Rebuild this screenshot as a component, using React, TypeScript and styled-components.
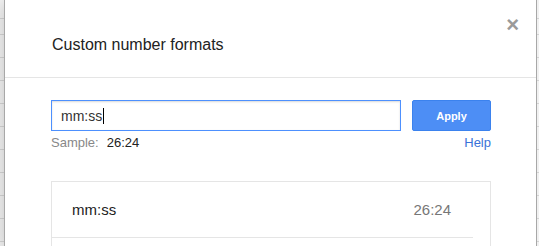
import styled, { createGlobalStyle } from 'styled-components'

const GlobalStyle = createGlobalStyle`
  html, body {
    margin: 0;
    padding: 0;
    background: #ffffff;
    font-family: "Liberation Sans", Arial, sans-serif;
  }
  body {
    width: 539px;
    height: 246px;
    overflow: hidden;
  }
`

const Page = styled.div`
  display: flex;
  width: 539px;
  height: 246px;
  overflow: hidden;
`
const Gutter = styled.div<{ $width: number }>`
  width: ${(p) => p.$width}px;
  flex-shrink: 0;
  background-color: #f1f1f1;
  background-image: repeating-linear-gradient(
    to bottom,
    transparent 0,
    transparent 10px,
    #d4d4d4 10px,
    #d4d4d4 11px,
    transparent 11px,
    transparent 23px
  );
  background-position: 0 24px;
`
const Dialog = styled.div`
  flex: 1;
  display: flex;
  flex-direction: column;
  background: #ffffff;
  border-left: 1px solid #a8a8a8;
  border-right: 1px solid #a8a8a8;
  box-shadow: 0 4px 16px rgba(0, 0, 0, 0.2);
  overflow: hidden;
`
const Header = styled.div`
  position: relative;
  flex-shrink: 0;
  height: 78px;
  box-sizing: border-box;
  padding: 35px 0 0 47px;
  border-bottom: 1px solid #e5e5e5;
`
const Title = styled.div`
  font-size: 16px;
  line-height: 19px;
  color: #222222;
`
const CloseButton = styled.div`
  position: absolute;
  top: 14px;
  right: 17px;
  font-size: 22px;
  line-height: 22px;
  font-weight: bold;
  color: #9a9a9a;
  cursor: pointer;
`
const Body = styled.div`
  flex-shrink: 0;
  display: flex;
  flex-direction: column;
  padding: 22px 45px 0 46px;
`
const InputRow = styled.div`
  display: flex;
  gap: 11px;
`
const FormatInput = styled.div`
  width: 350px;
  height: 31px;
  box-sizing: border-box;
  border: 1px solid #4d90fe;
  box-shadow: inset 0 1px 2px rgba(0, 0, 0, 0.15);
  padding: 0 9px;
  display: flex;
  align-items: center;
  font-size: 14px;
  color: #333333;
`
const Caret = styled.span`
  display: inline-block;
  width: 1px;
  height: 16px;
  margin-left: 1px;
  background: #000000;
  vertical-align: middle;
`
const ApplyButton = styled.div`
  width: 79px;
  height: 31px;
  box-sizing: border-box;
  border: 1px solid #3b82ee;
  border-radius: 2px;
  background: #4d8ef5;
  color: #ffffff;
  font-size: 11px;
  font-weight: bold;
  display: flex;
  align-items: center;
  justify-content: center;
`
const SampleRow = styled.div`
  display: flex;
  justify-content: space-between;
  margin-top: 4px;
  font-size: 13px;
  line-height: 15px;
`
const Sample = styled.div`
  color: #888888;
  span {
    color: #222222;
    margin-left: 8px;
  }
`
const HelpLink = styled.a`
  color: #3a72d8;
  text-decoration: none;
`
const FormatList = styled.div`
  margin-top: 31px;
  border: 1px solid #e5e5e5;
  height: 80px;
`
const FormatRow = styled.div`
  display: flex;
  justify-content: space-between;
  align-items: center;
  height: 55px;
  margin-right: 17px;
  padding: 0 22px 0 20px;
  border-bottom: 1px solid #e5e5e5;
  font-size: 15px;
`
const FormatName = styled.span`
  color: #222222;
`
const FormatValue = styled.span`
  color: #777777;
`

export default function App() {
  return (
    <>
      <GlobalStyle />
      <Page>
        <Gutter $width={4} />
        <Dialog>
          <Header>
            <Title>Custom number formats</Title>
            <CloseButton>×</CloseButton>
          </Header>
          <Body>
            <InputRow>
              <FormatInput>
                mm:ss<Caret />
              </FormatInput>
              <ApplyButton>Apply</ApplyButton>
            </InputRow>
            <SampleRow>
              <Sample>
                Sample:<span>26:24</span>
              </Sample>
              <HelpLink>Help</HelpLink>
            </SampleRow>
            <FormatList>
              <FormatRow>
                <FormatName>mm:ss</FormatName>
                <FormatValue>26:24</FormatValue>
              </FormatRow>
            </FormatList>
          </Body>
        </Dialog>
        <Gutter $width={2} />
      </Page>
    </>
  )
}
